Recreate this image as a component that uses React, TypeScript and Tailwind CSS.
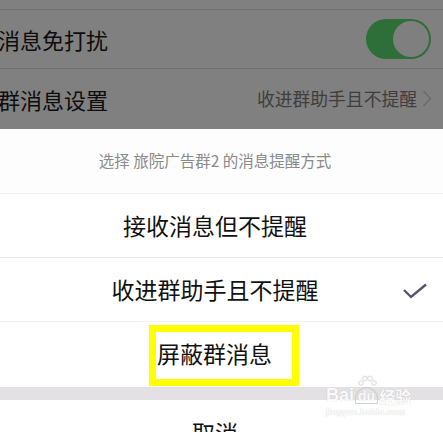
const cjk = { fontFamily: '"Noto Sans CJK SC", "Noto Sans", sans-serif' };
const latin = { fontFamily: '"Liberation Sans", sans-serif' };

const App = () => {
  return (
    <div className="w-[443px] h-[432px] overflow-hidden bg-white relative" style={cjk}>
      {/* dimmed settings page behind the sheet */}
      <div className="bg-[#808080] h-[129px] flex flex-col">
        <div className="h-[10px] border-b border-[#727272]" />
        <div className="h-[59px] flex items-center justify-between border-b border-[#727272] pr-[12px]">
          <span className="-ml-[2px] text-[22px] leading-none text-[#0d0d0d]">消息免打扰</span>
          <div className="w-[65px] h-[40px] rounded-full bg-[#2e6e38] flex items-center justify-end p-[2px]">
            <div className="w-[36px] h-[36px] rounded-full bg-[#7f7f7f]" />
          </div>
        </div>
        <div className="flex-1 flex items-center justify-between pr-[11px]">
          <span className="-ml-[2px] text-[22px] leading-none text-[#0d0d0d]">群消息设置</span>
          <div className="flex items-center gap-[5px]">
            <span className="text-[17.8px] leading-none text-[#3e3e3e]">收进群助手且不提醒</span>
            <svg width="10" height="17" viewBox="0 0 10 17" fill="none">
              <path d="M1.5 1 L8.5 8.5 L1.5 16" stroke="#6a6a6a" strokeWidth="1.4" />
            </svg>
          </div>
        </div>
      </div>

      {/* action sheet */}
      <div className="flex flex-col">
        <div className="h-[65px] flex items-center justify-center border-b border-[#f1f1f1] bg-[#fdfdfd] pr-[13px]">
          <span className="text-[15.5px] text-[#8a8a8a]">选择 旅院广告群2 的消息提醒方式</span>
        </div>
        <div className="h-[64px] flex items-center justify-center border-b border-[#e6e6e6] pr-[13px]">
          <span className="text-[23px] leading-none text-[#111]">接收消息但不提醒</span>
        </div>
        <div className="h-[64px] flex items-center justify-center border-b border-[#f2f2f2] relative pr-[13px]">
          <span className="text-[23px] leading-none text-[#111]">收进群助手且不提醒</span>
          <svg className="absolute right-[15px] top-[25px]" width="26" height="16" viewBox="0 0 26 16" fill="none">
            <path d="M2 7 L9 14 L24 1.5" stroke="#56566a" strokeWidth="2.4" />
          </svg>
        </div>
        <div className="h-[65px] flex items-center justify-center pl-[5px]">
          <div className="w-[150px] h-[61px] border-[7px] border-[#ffff00] flex items-center pl-[1px] pb-[5px] mt-[2px]">
            <span className="text-[23px] leading-none text-[#111]">屏蔽群消息</span>
          </div>
        </div>
        <div className="h-[13px] bg-[#e3e1e3]" />
        <div className="h-[60px] flex justify-center pt-[21px] pr-[13px]">
          <span className="text-[23px] leading-none text-[#111]">取消</span>
        </div>
      </div>

      {/* baidu watermark */}
      <div className="absolute left-[326px] top-[375px] flex flex-col items-start text-white [text-shadow:0_0_1px_#b8b8b8] opacity-80">
        <div className="flex items-end leading-none">
          <span className="text-[18px] font-bold" style={latin}>Bai</span>
          <div className="flex flex-col items-center mx-[1px]">
            <svg width="20" height="12" viewBox="0 0 20 12" fill="#fff" stroke="#c4c4c4" strokeWidth="0.8">
              <circle cx="4" cy="8" r="2.2" />
              <circle cx="8" cy="3.5" r="2.4" />
              <circle cx="13" cy="3.5" r="2.4" />
              <circle cx="17" cy="8" r="2.2" />
            </svg>
            <span className="text-[14px] font-bold leading-none rounded-t-full border border-[#c4c4c4] px-[2px] pt-[1px]" style={latin}>du</span>
          </div>
          <span className="text-[16px] font-bold leading-[16px]">经验</span>
        </div>
        <span className="text-[9px] leading-none mt-[4px] font-bold" style={latin}>jingyan.baidu.com</span>
      </div>
    </div>
  );
};

export default App;
